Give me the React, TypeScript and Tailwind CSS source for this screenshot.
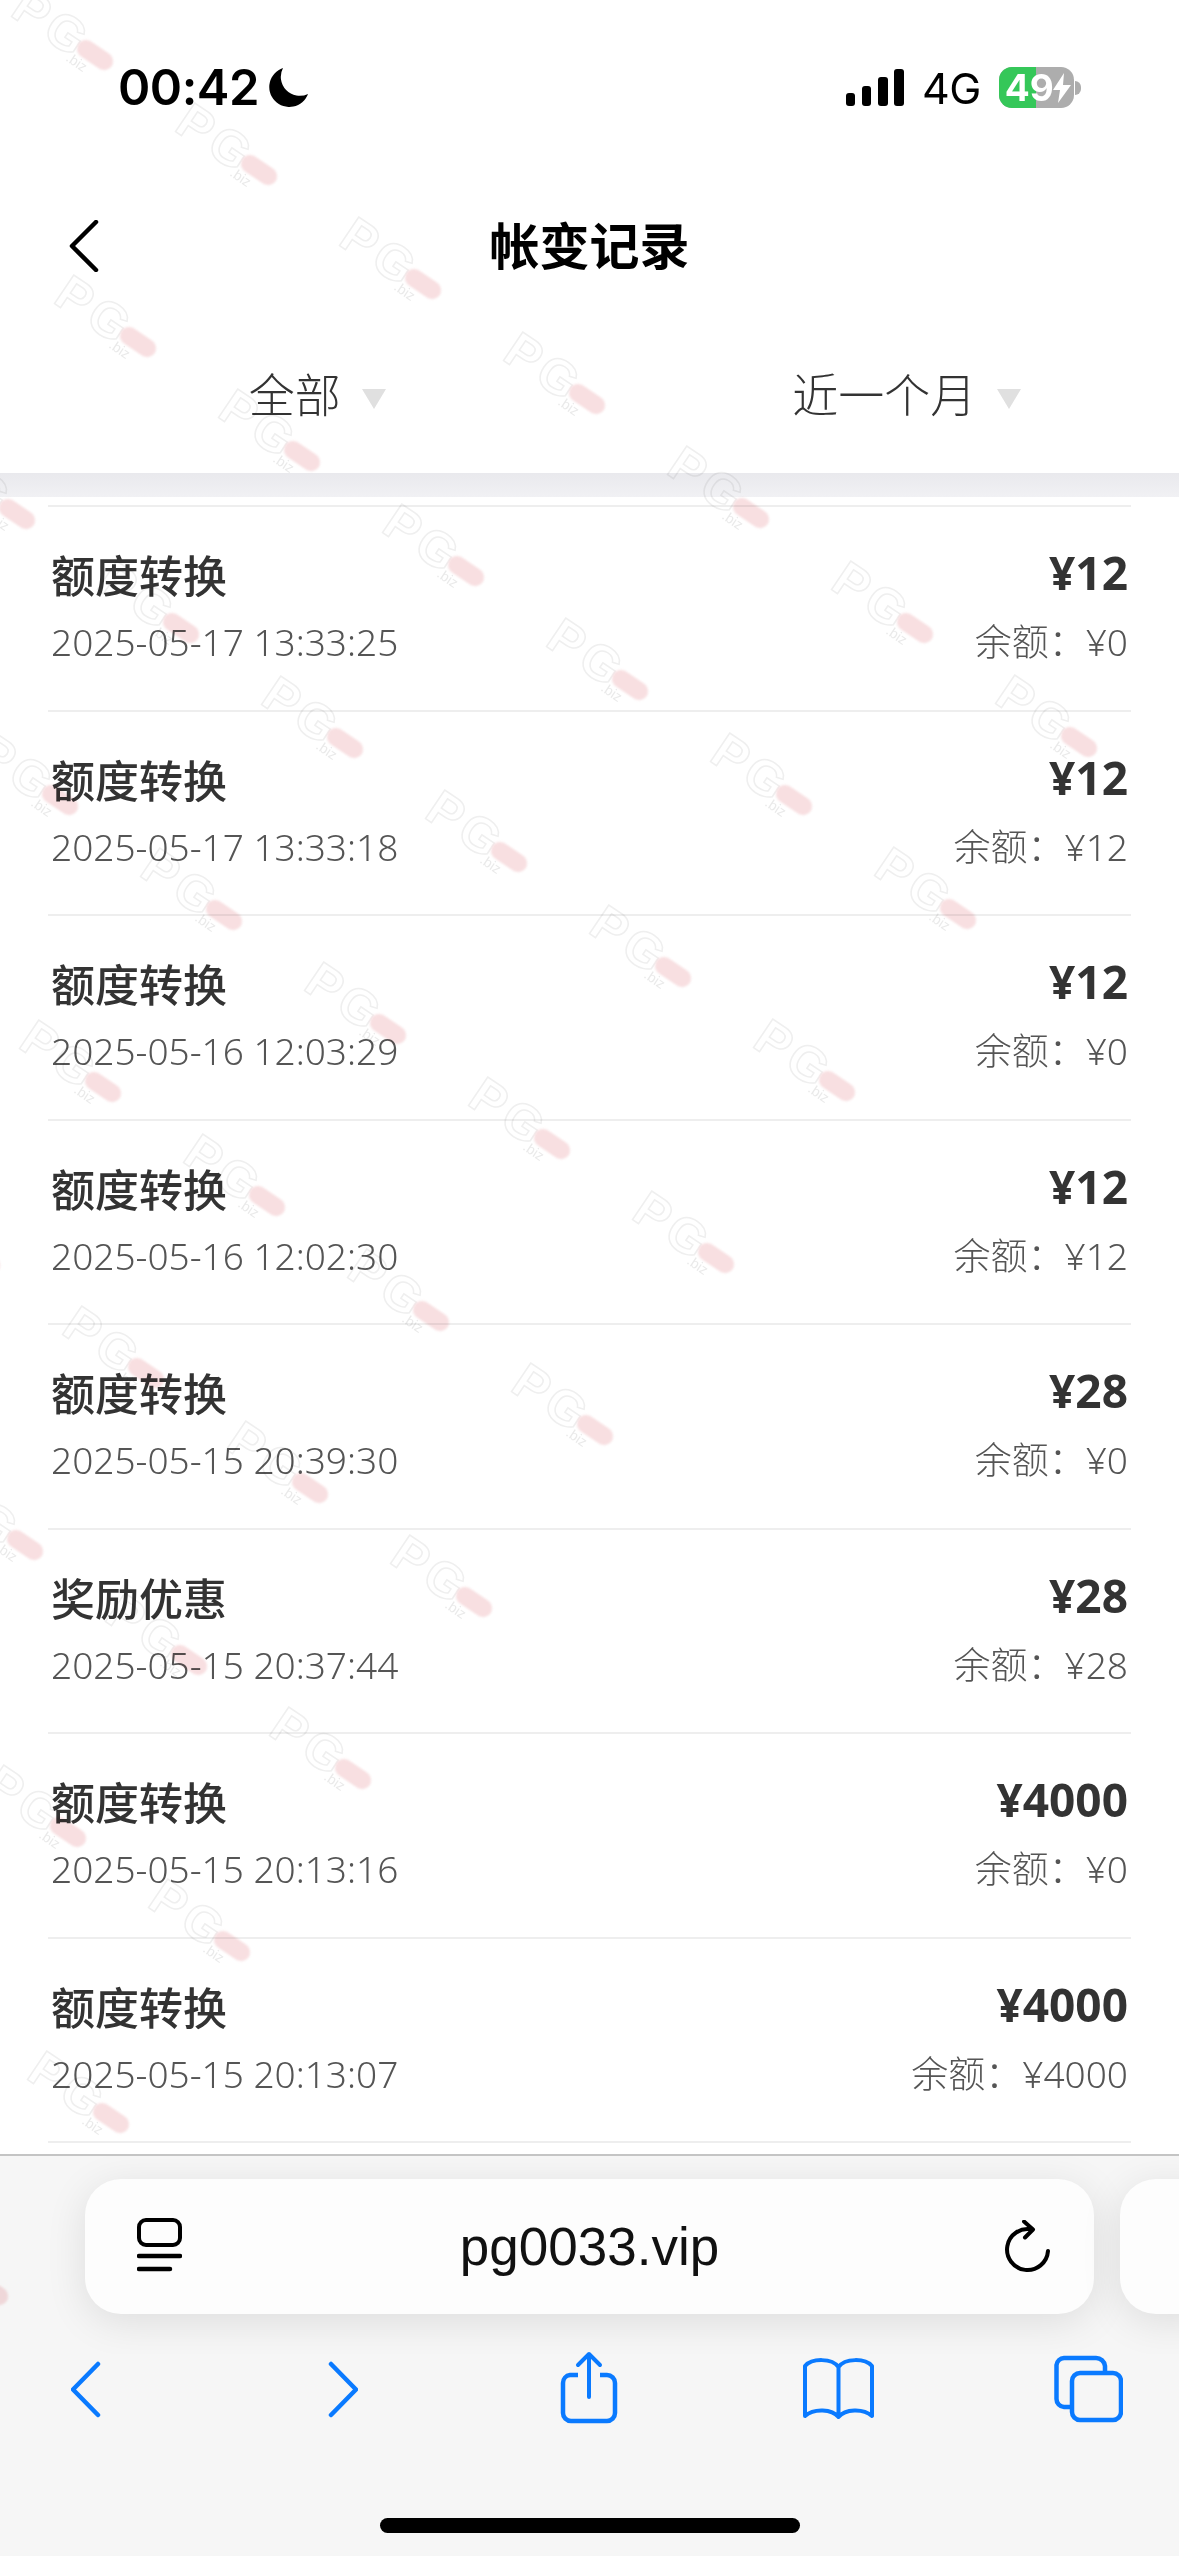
const rows = [
  { title: '额度转换', time: '2025-05-17 13:33:25', amount: '¥12', balance: '¥0' },
  { title: '额度转换', time: '2025-05-17 13:33:18', amount: '¥12', balance: '¥12' },
  { title: '额度转换', time: '2025-05-16 12:03:29', amount: '¥12', balance: '¥0' },
  { title: '额度转换', time: '2025-05-16 12:02:30', amount: '¥12', balance: '¥12' },
  { title: '额度转换', time: '2025-05-15 20:39:30', amount: '¥28', balance: '¥0' },
  { title: '奖励优惠', time: '2025-05-15 20:37:44', amount: '¥28', balance: '¥28' },
  { title: '额度转换', time: '2025-05-15 20:13:16', amount: '¥4000', balance: '¥0' },
  { title: '额度转换', time: '2025-05-15 20:13:07', amount: '¥4000', balance: '¥4000' },
]

// watermark tiles only fill a wedge of the page, positions are pill centres
const marks: { x: number; y: number }[] = []
for (let m = -10; m <= 4; m++) {
  for (let n = 0; n < 14; n++) {
    const x = 423 + 164 * m - 121 * n
    const y = 284 + 114.5 * m + 172 * n
    if (x > -60 && y > -20 && y < 2330) marks.push({ x, y })
  }
}

function Watermark({ x, y }: { x: number; y: number }) {
  return (
    <div className="absolute w-0 h-0" style={{ left: x, top: y }}>
      <div className="absolute left-[-92px] top-[-28px] w-[130px] h-[56px] rotate-[34deg] origin-[92px_28px]">
        <span className="absolute left-[-2px] top-[-2px] text-[50px] leading-[56px] font-bold tracking-[5px] text-transparent [-webkit-text-stroke:1.5px_#efefef] font-['Liberation_Sans',sans-serif]">
          PG
        </span>
        <span className="absolute left-[72px] top-[19px] w-[40px] h-[18px] rounded-full bg-[#f8dfe1] blur-[1px]" />
        <span className="absolute left-[70px] top-[36px] text-[14px] leading-[16px] text-[#eaeaea] font-['Liberation_Sans',sans-serif]">
          .biz
        </span>
      </div>
    </div>
  )
}

function StatusBar() {
  return (
    <div className="h-[176px] flex items-start pt-[64px] pl-[118px] font-['Inter',sans-serif] text-black">
      <span className="text-[49px] leading-[48px] font-semibold tracking-[-0.5px]">00:42</span>
      <svg width="40" height="42" viewBox="0 0 40 42" className="ml-[10px] mt-[3px]">
        <path d="M14 1 A20 20 0 1 0 39 27 A19 19 0 0 1 14 1 Z" fill="#000" />
      </svg>
      <svg width="58" height="38" viewBox="0 0 58 38" className="ml-[537px] mt-[5px]">
        <rect x="0" y="24" width="9" height="13" rx="3" fill="#000" />
        <rect x="16" y="17" width="9" height="20" rx="3" fill="#000" />
        <rect x="32" y="8" width="10" height="29" rx="3" fill="#000" />
        <rect x="48" y="0" width="10" height="37" rx="3" fill="#000" />
      </svg>
      <span className="ml-[18px] text-[43px] leading-[48px] font-normal tracking-[-0.5px]">4G</span>
      <div className="ml-[18px] mt-[3px] flex items-center">
        <div className="relative w-[75px] h-[41px] rounded-[13px] overflow-hidden bg-[#adadad] flex">
          <div className="w-[37px] h-full bg-[#35c759]" />
          <span className="absolute left-[6px] top-0 text-[37px] leading-[41px] font-bold text-white">49</span>
          <svg width="18" height="30" viewBox="0 0 18 30" className="absolute left-[54px] top-[6px]">
            <path d="M11 0 L0 17 H7 L5 30 L18 12 H10 Z" fill="#fff" />
          </svg>
        </div>
        <div className="ml-[1px] w-[6px] h-[14px] rounded-r-full bg-[#adadad]" />
      </div>
    </div>
  )
}

function Filter({ label }: { label: string }) {
  return (
    <div className="flex items-center justify-center pb-[6px]">
      <span className="relative text-[46px] leading-[60px] text-[#333] font-['Noto_Sans_CJK_SC',sans-serif] font-light">
        {label}
        <span className="absolute left-[calc(100%+21px)] top-[27px] w-0 h-0 border-x-[12px] border-x-transparent border-t-[20px] border-t-[#e0e0e0]" />
      </span>
    </div>
  )
}

function Row({ title, time, amount, balance }: (typeof rows)[number]) {
  return (
    <div className="h-[204.5px] border-t-2 border-[#eeeeee] flex justify-between pl-[3px] pr-[3px] pt-[37px]">
      <div className="flex flex-col">
        <span className="text-[44px] leading-[60px] font-medium text-[#333] font-['Noto_Sans_CJK_SC',sans-serif]">{title}</span>
        <span className="mt-[13px] text-[37px] leading-[50px] font-light text-[#555] font-['Noto_Sans',sans-serif]">{time}</span>
      </div>
      <div className="flex flex-col items-end">
        <span className="-mt-[2px] text-[46px] leading-[60px] font-bold text-[#333] font-['Noto_Sans',sans-serif]">{amount}</span>
        <span className="mt-[15px] text-[37px] leading-[50px] font-light text-[#555] font-['Noto_Sans','Noto_Sans_CJK_SC',sans-serif]">余额：{balance}</span>
      </div>
    </div>
  )
}

function BottomBar() {
  return (
    <div className="h-[402px] shrink-0 border-t-2 border-[#c4c4c4] bg-[#f6f6f6]">
      <div className="pt-[23px] pb-[40px] -mb-[40px] pl-[85px] flex gap-[26px] overflow-hidden">
        <div className="w-[1009px] h-[135px] shrink-0 rounded-[36px] bg-[#fdfdfd] shadow-[0_8px_40px_rgba(0,0,0,0.10)] flex items-center justify-between pl-[52px] pr-[44px]">
          <svg width="45" height="58" viewBox="0 0 45 58">
            <rect x="2" y="2" width="41" height="25" rx="7" fill="none" stroke="#000" strokeWidth="4" />
            <path d="M2 38 H43 M2 51 H33" stroke="#000" strokeWidth="4.5" strokeLinecap="round" />
          </svg>
          <span className="pr-[8px] text-[53px] leading-[60px] text-[#111] font-['Liberation_Sans',sans-serif]">pg0033.vip</span>
          <svg width="45" height="54" viewBox="0 0 45 54">
            <path d="M27 9.5 A20.5 20.5 0 1 0 43 31" fill="none" stroke="#000" strokeWidth="4" strokeLinecap="round" />
            <path d="M19 1.5 L28 9.5 L20 17.5" fill="none" stroke="#000" strokeWidth="4" strokeLinecap="round" strokeLinejoin="round" />
          </svg>
        </div>
        <div className="w-[100px] h-[135px] shrink-0 rounded-[36px] bg-[#fdfdfd] shadow-[0_8px_40px_rgba(0,0,0,0.10)]" />
      </div>
      <div className="mt-[37px] h-[80px] flex items-start pl-[71px] text-[#0a7aff]">
        <svg width="30" height="80" viewBox="0 0 30 80">
          <path d="M27 13 L2 38.500 L27 64" fill="none" stroke="currentColor" strokeWidth="4.500" strokeLinecap="round" strokeLinejoin="round" />
        </svg>
        <svg width="30" height="80" viewBox="0 0 30 80" className="ml-[227px]">
          <path d="M3 13 L28 38.500 L3 64" fill="none" stroke="currentColor" strokeWidth="4.500" strokeLinecap="round" strokeLinejoin="round" />
        </svg>
        <svg width="58" height="80" viewBox="0 0 58 80" className="ml-[202px]">
          <path d="M18 24 H10 A8 8 0 0 0 3 32 V62 A8 8 0 0 0 11 70 H47 A8 8 0 0 0 55 62 V32 A8 8 0 0 0 47 24 H40" fill="none" stroke="currentColor" strokeWidth="4.500" />
          <path d="M29 46 V3 M18 14 L29 3 L40 14" fill="none" stroke="currentColor" strokeWidth="4" strokeLinecap="round" strokeLinejoin="round" />
        </svg>
        <svg width="73" height="80" viewBox="0 0 73 80" className="ml-[184px]">
          <path d="M36.500 16 C30 7 10 7 3 15 V65 C12 57 30 58 36.500 66 C43 58 61 57 70 65 V15 C63 7 43 7 36.500 16 Z M36.500 16 V66" fill="none" stroke="currentColor" strokeWidth="4" strokeLinejoin="round" />
        </svg>
        <svg width="69" height="80" viewBox="0 0 69 80" className="ml-[179px]">
          <path d="M17 56 H10 A8 8 0 0 1 2.500 48 V14 A8 8 0 0 1 10 7 H42 A9 9 0 0 1 51 15 V21" fill="none" stroke="currentColor" strokeWidth="4.500" />
          <rect x="18" y="22" width="49" height="47" rx="8" fill="none" stroke="currentColor" strokeWidth="4.500" />
        </svg>
      </div>
      <div className="mt-[87px] mx-auto w-[420px] h-[15px] rounded-full bg-black" />
    </div>
  )
}

export default function App() {
  return (
    <div className="relative w-[1179px] h-[2556px] overflow-hidden bg-white flex flex-col">
      <StatusBar />
      <div className="h-[140px] shrink-0 relative flex items-center justify-center pb-[6px]">
        <svg width="30" height="52" viewBox="0 0 30 52" className="absolute left-[69px] top-[44px]">
          <path d="M27 2 L3 26 L27 50" fill="none" stroke="#000" strokeWidth="4.500" strokeLinecap="round" strokeLinejoin="round" />
        </svg>
        <span className="text-[50px] leading-[60px] font-bold text-black font-['Noto_Sans_CJK_SC',sans-serif]">帐变记录</span>
      </div>
      <div className="h-[157px] shrink-0 grid grid-cols-2">
        <Filter label="全部" />
        <Filter label="近一个月" />
      </div>
      <div className="h-[24px] shrink-0 bg-gradient-to-b from-[#e9e9ed] to-[#f1f1f4]" />
      <div className="flex-1 pt-[8px] px-[48px] min-h-0">
        {rows.map((r) => (
          <Row key={r.time} {...r} />
        ))}
        <div className="border-t-2 border-[#eeeeee]" />
      </div>
      <BottomBar />
      <div className="absolute inset-0 z-10 pointer-events-none mix-blend-multiply">
        {marks.map((p) => (
          <Watermark key={`${p.x}-${p.y}`} x={p.x} y={p.y} />
        ))}
      </div>
    </div>
  )
}
